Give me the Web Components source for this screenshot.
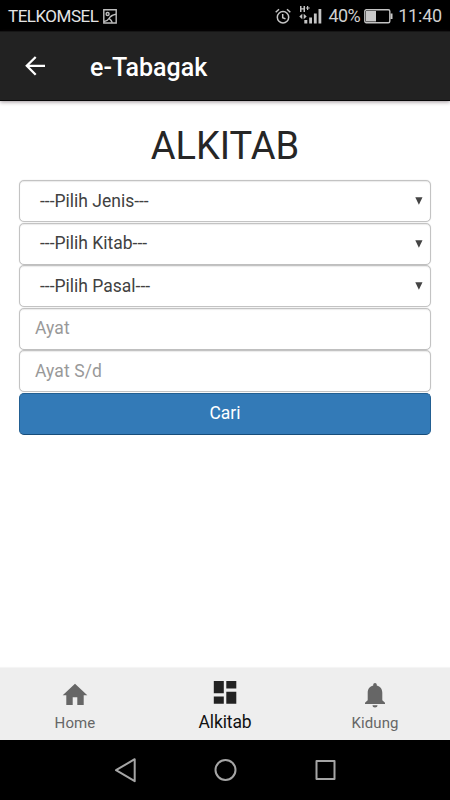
<!DOCTYPE html>
<html lang="id">
<head>
<meta charset="utf-8">
<title>e-Tabagak</title>
<style>
html,body{margin:0;height:100%;background:#fff;font-family:Roboto,"Liberation Sans",sans-serif}
</style>
</head>
<body>
<tabagak-app></tabagak-app>
<script>
function define(name, html){
  const t=document.createElement('template');
  t.innerHTML=html;
  customElements.define(name,class extends HTMLElement{
    constructor(){super();this.attachShadow({mode:'open'}).append(t.content.cloneNode(true));}
  });
}

define('status-bar',`
<style>
:host{display:flex;align-items:center;justify-content:space-between;height:31px;box-sizing:border-box;padding:1px 8px 0;background:#000;color:#d0d0d0;flex:none;white-space:nowrap}
.g{display:flex;align-items:center}
.carrier{font-size:17px;line-height:20px;letter-spacing:-.5px;color:#e4e4e4}
.num{font-size:18px;line-height:20px}
svg{display:block;flex:none}
</style>
<div class="g"><span class="carrier">TELKOMSEL</span>
<svg style="margin-left:5px" width="14" height="15" viewBox="0 0 14 15" fill="none" stroke="#bdbdbd" stroke-width="1.4"><path d="M.8.8h12.4v13.2H.8z"/><circle cx="4.6" cy="5" r="1.5"/><path d="M1 12.5c3-.3 4-1.200 5-3S9 6 13 5.300M6 9.300c1.500 1 2.500 2 3.300 4.500"/></svg></div>
<div class="g">
<svg width="16" height="17" viewBox="0 0 16 17" fill="none" stroke="#c4c4c4" stroke-width="1.5"><circle cx="8" cy="9.300" r="5.700"/><path d="M.7 4.200 4 1.200M15.300 4.200 12 1.200M7.700 6v3.700l2.800 1.200"/></svg>
<svg style="margin:-2px 0 0 8px" width="24" height="20" viewBox="0 0 24 20" fill="#c4c4c4"><path d="M1 1h1.500v2.300h2V1H6v6H4.500V4.600h-2V7H1zM8 1h1.200v1.400h1.500v1.100H9.200V5H8V3.500H6.800V2.400H8zM.3 11.500l3-2.700v5.400zM7.700 11.500l-3-2.700v5.400zM5.300 15h3v3.500h-3zM10.200 12.500h2.800v6h-2.800zM14.900 8.500h2.800v10h-2.800zM19.500 4h2.800v14.500h-2.800z"/></svg>
<span class="num" style="margin-left:6px;letter-spacing:-.6px">40%</span>
<svg style="margin-left:4px" width="29" height="15" viewBox="0 0 29 15"><rect x=".8" y=".8" width="25" height="13" rx="1.500" fill="none" stroke="#c4c4c4" stroke-width="1.400"/><path d="M2 2h10v10.600H2zM26.500 4.500h2v5.500h-2z" fill="#c9c9c9"/></svg>
<span class="num" style="margin-left:5px;letter-spacing:-.2px">11:40</span></div>`);

define('app-bar',`
<style>
:host{display:flex;align-items:center;height:70px;box-sizing:border-box;padding:0 0 0 25px;background:#222;color:#fff;border-top:1px solid #161616;border-bottom:1px solid #080808;box-shadow:0 1px 4px rgba(40,20,30,.45);flex:none;position:relative}
svg{display:block}
h1{margin:4px 0 0 45px;font-size:25px;line-height:30px;font-weight:500}
</style>
<svg width="20" height="20" viewBox="0 0 20 20" fill="none" stroke="#fff" stroke-width="2.300"><path d="M20 9.800H2M10.700 1 1.800 9.800l8.900 8.900"/></svg>
<h1><slot></slot></h1>`);

define('pick-field',`
<style>
:host{display:flex;align-items:center;height:42px;box-sizing:border-box;border:1.500px solid #c3c3c3;border-radius:5px;background:#fff;box-shadow:inset 0 1px 1px rgba(0,0,0,.08),0 0 1px rgba(0,0,0,.2);padding:0 7px 1px 20px;justify-content:space-between;color:#414141;font-size:17.500px;line-height:24px}
svg{display:block;margin-top:1px}
</style>
<span><slot></slot></span>
<svg width="8" height="8" viewBox="0 0 8 8"><path d="M.3.300h7.200L3.900 7.700z" fill="#444"/></svg>`);

define('text-field',`
<style>
:host{display:flex;align-items:center;height:42px;box-sizing:border-box;border:1.500px solid #c3c3c3;border-radius:5px;background:#fff;box-shadow:inset 0 1px 1px rgba(0,0,0,.08),0 0 1px rgba(0,0,0,.2);padding:0 15px 1px;color:#999;font-size:17.500px;line-height:24px;letter-spacing:.1px}
</style>
<span><slot></slot></span>`);

define('action-button',`
<style>
:host{display:flex;align-items:center;justify-content:center;height:42px;box-sizing:border-box;border:1px solid #225f92;border-bottom-color:#174d7a;border-radius:5px;background:#337ab7;color:#fff;font-size:17.500px;line-height:24px;padding-bottom:1px}
</style>
<span><slot></slot></span>`);

define('search-form',`
<style>
:host{display:flex;flex-direction:column;flex:1;padding:21px 19px 0;background:#fff}
h2{margin:0 0 8px;height:50px;text-align:center;font-size:38px;line-height:49px;font-weight:400;color:#262626}
.fields{display:grid;gap:.5px}
</style>
<h2>ALKITAB</h2>
<div class="fields">
<pick-field>---Pilih Jenis---</pick-field>
<pick-field>---Pilih Kitab---</pick-field>
<pick-field>---Pilih Pasal---</pick-field>
<text-field>Ayat</text-field>
<text-field>Ayat S/d</text-field>
<action-button>Cari</action-button>
</div>`);

define('tab-item',`
<style>
:host{display:flex;flex-direction:column;align-items:center;flex:1;color:#666;font-size:15px;letter-spacing:.1px;line-height:20px;padding-top:13px}
:host([active]){color:#111;font-size:17.500px;letter-spacing:-.1px;padding-top:11px}
.i{height:32px}
:host([active]) .i{height:33px}
</style>
<div class="i"><slot name="icon"></slot></div><span><slot></slot></span>`);

define('tab-bar',`
<style>
:host{display:flex;height:72px;background:#eee;flex:none;box-shadow:0 -1px 1px rgba(0,0,0,.04)}
svg{display:block}
</style>
<tab-item><svg slot="icon" width="30" height="28" viewBox="0 0 30 28"><path d="M15 2.700 27.300 14.300H23.700V24h-6.400v-7.700h-4.600V24H6.300v-9.700H2.700z" fill="#666"/></svg>Home</tab-item>
<tab-item active><svg slot="icon" width="30" height="28" viewBox="0 0 30 28"><path d="M3.800 2h10v12.300h-10zM3.800 17.500h10v7.300h-10zM16.300 2h10v7.500h-10zM16.300 12.700h10v12.100h-10z" fill="#222"/></svg>Alkitab</tab-item>
<tab-item><svg slot="icon" width="30" height="28" viewBox="0 0 30 28"><path d="M15 2c1.100 0 1.800.8 1.800 1.900v.7c3.500.8 5.500 3.700 5.500 7.200v7.500l2.700 2.500v1.200H5v-1.200l2.700-2.500v-7.500c0-3.500 2-6.400 5.500-7.200v-.7C13.200 2.800 13.900 2 15 2zM12.500 24.200h5c0 1.300-1.100 2.300-2.500 2.300s-2.500-1-2.500-2.300z" fill="#666"/></svg>Kidung</tab-item>`);

define('system-nav',`
<style>
:host{display:flex;justify-content:center;align-items:center;gap:76px;height:60px;background:#000;flex:none}
svg{display:block}
</style>
<svg width="24" height="26" viewBox="0 0 24 26" fill="none" stroke="#a5a5a5" stroke-width="2" stroke-linejoin="round"><path d="M21.700 2.200v22L3 13.200z"/></svg>
<svg width="24" height="26" viewBox="0 0 24 26" fill="none" stroke="#a5a5a5" stroke-width="2"><circle cx="12.500" cy="13" r="10"/></svg>
<svg width="24" height="26" viewBox="0 0 24 26" fill="none" stroke="#a5a5a5" stroke-width="2" stroke-linejoin="round"><path d="M3.500 4h18v18h-18z"/></svg>`);

define('tabagak-app',`
<style>:host{display:flex;flex-direction:column;width:450px;height:800px;overflow:hidden}</style>
<status-bar></status-bar>
<app-bar>e-Tabagak</app-bar>
<search-form></search-form>
<tab-bar></tab-bar>
<system-nav></system-nav>`);
</script>
</body>
</html>
